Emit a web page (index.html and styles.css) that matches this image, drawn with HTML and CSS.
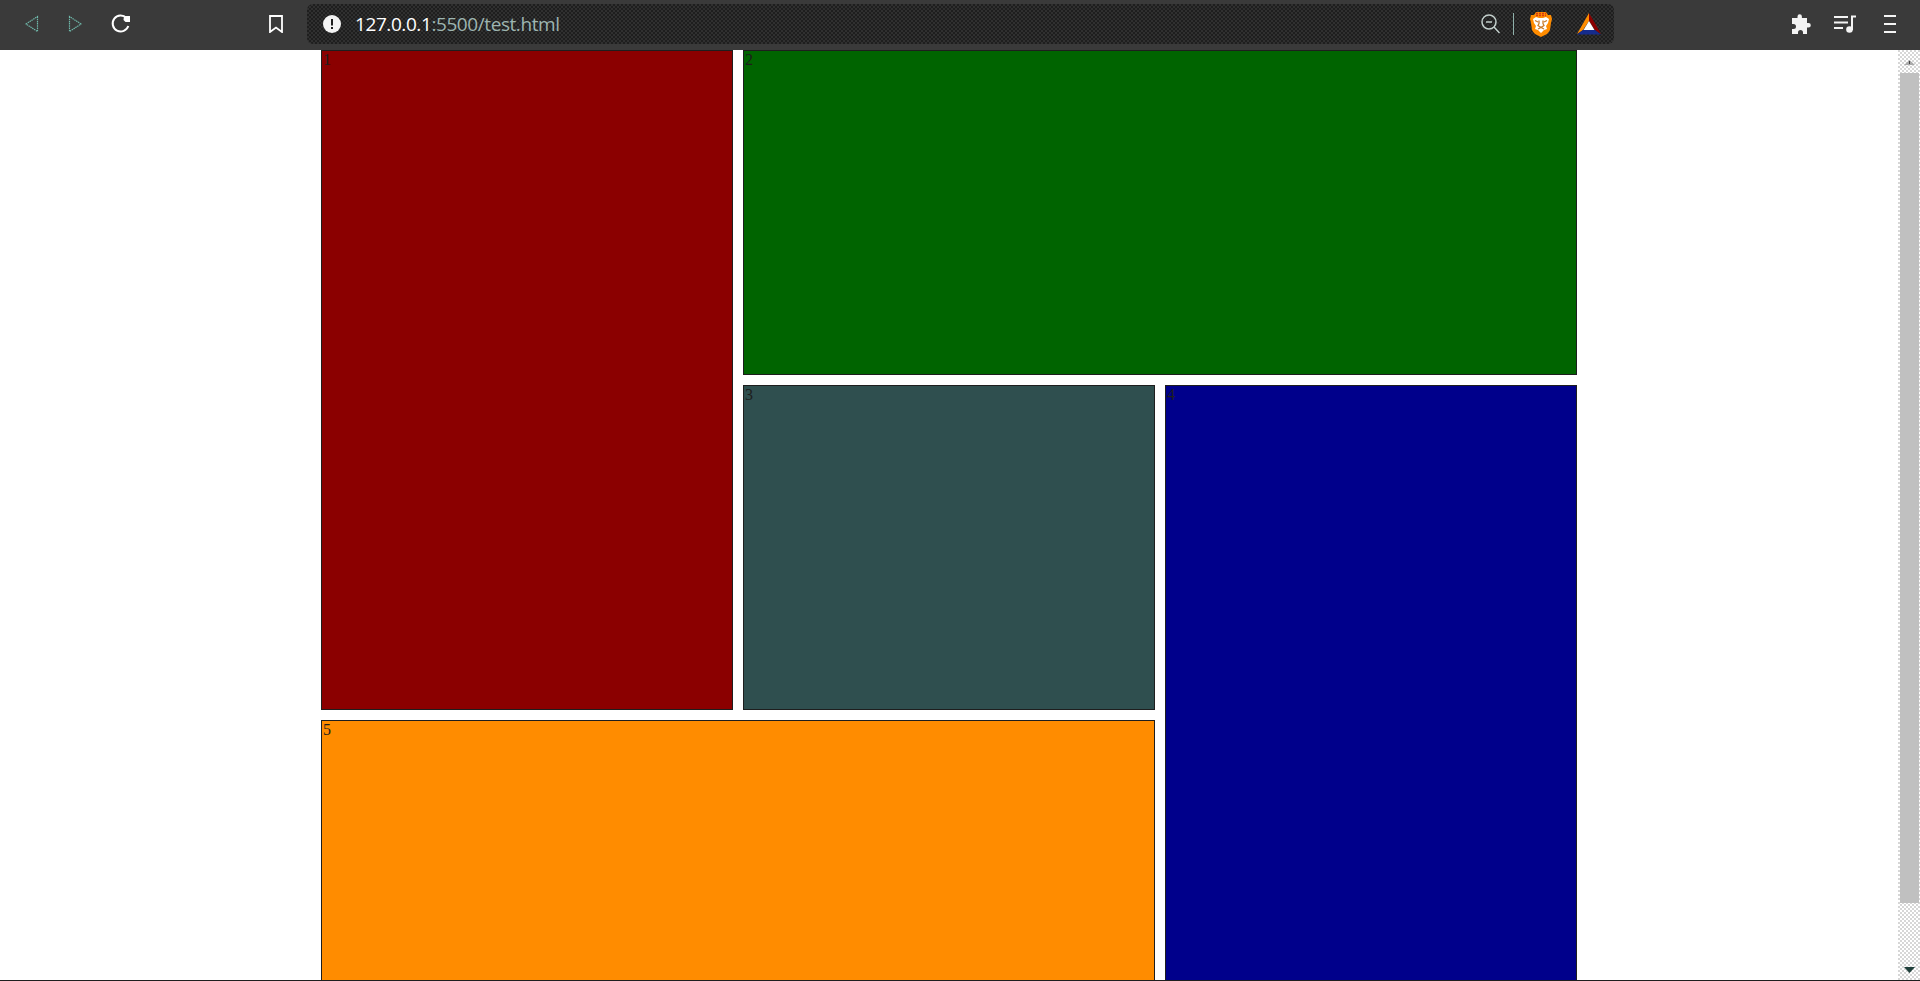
FILE: index.html
```html
<!DOCTYPE html>
<html lang="en">
<head>
    <meta charset="UTF-8">
    <meta name="viewport" content="width=device-width, initial-scale=1.0">
    <title>test.html</title>
    <link rel="stylesheet" href="styles.css">
</head>
<body>
    <!-- browser bar -->
    <header class="toolbar">
        <nav class="nav-buttons">
            <svg class="arrow" width="14" height="18" viewBox="0 0 14 18"><path d="M12.5 1.5v15L1 9z"/></svg>
            <svg class="arrow" width="14" height="18" viewBox="0 0 14 18"><path d="M1.5 1.5v15L13 9z"/></svg>
            <svg class="reload" width="20" height="20" viewBox="0 0 20 20">
                <path d="M15.5 4A8 8 0 1 0 17.3 12" fill="none" stroke="#fff" stroke-width="2"/>
                <path d="M13 2h6v6h-4.500l-2-2z" fill="#fff"/>
            </svg>
        </nav>
        <svg class="bookmark" width="14" height="18" viewBox="0 0 14 18"><path d="M1 1h12v16l-6-4.500L1 17z" fill="none" stroke="#fff" stroke-width="1.800"/></svg>

        <div class="address">
            <svg width="18" height="18" viewBox="0 0 18 18">
                <circle cx="9" cy="9" r="9" fill="#f4f4f4"/>
                <path d="M8 4h2v6.500H8zM8 12h2v2H8z" fill="#1e1e1e"/>
            </svg>
            <span class="url"><b>127.0.0.1</b>:5500/test.html</span>
            <svg class="zoom" width="19" height="20" viewBox="0 0 19 20" fill="none" stroke="#c3cfcc" stroke-width="1.500">
                <circle cx="8" cy="8" r="7"/>
                <path d="M5 8h6M13 13l5.500 6"/>
            </svg>
            <span class="divider"></span>
            <svg class="lion" width="22" height="25" viewBox="0 0 22 25">
                <path d="M6 0h10l2 3 3 0 1 4-1 4-1 7q-1 2-3 4l-6 3-6-3q-2-2-3-4L1 11 0 7l1-4h3z" fill="#ff8c00"/>
                <path d="M6 1.500h10M6 3.500h10" stroke="#d93c10" stroke-width="1.500" stroke-dasharray="2 1"/>
                <path d="M3 7l3-2 3 1h4l3-1 3 2-1 4-2 3 1 3-3 1-3 3-3-3-3-1 1-3-2-3z" fill="#fff"/>
                <path d="M5 8.500l3 1.500M17 8.500l-3 1.500M9 8.500v3l-1 2 3 2 3-2-1-2v-3M8 17l3-1.500 3 1.500" fill="none" stroke="#c87a28" stroke-width="1.300"/>
            </svg>
            <svg class="bat" width="24" height="22" viewBox="0 0 24 22">
                <path d="M12 0L0 21l6-4 6-9z" fill="#ff8c00"/>
                <path d="M12 0l12 21-6-4-6-9z" fill="#8b0000"/>
                <path d="M0 21.500h24L18 17H6z" fill="#152b8c"/>
                <path d="M12 8l5.500 9h-11z" fill="#fff"/>
            </svg>
        </div>

        <div class="actions">
            <svg class="puzzle" width="20" height="20" viewBox="0 0 20 20"><path d="M1 4h5.500V2.500a2.200 2.200 0 0 1 4.400 0V4H16v5h1.500a2.300 2.300 0 0 1 0 4.600H16V20h-4v-1.500a2.500 2.500 0 0 0-5 0V20H1v-5h1.500a2.500 2.500 0 0 0 0-5H1z" fill="#f4f4f4"/></svg>
            <svg class="playlist" width="22" height="18" viewBox="0 0 22 18">
                <path d="M0 2h14M0 7.500h14M0 13h9M18 15V1.500h4" fill="none" stroke="#f4f4f4" stroke-width="2"/>
                <circle cx="15.500" cy="14.500" r="3.300" fill="#f4f4f4"/>
            </svg>
            <svg width="12" height="18" viewBox="0 0 12 18"><path d="M0 1h12M0 9h12M0 17h12" stroke="#f4f4f4" stroke-width="2"/></svg>
        </div>
    </header>

    <div class="viewport">
        <main class="container">
            <div class="item item1">1</div>
            <div class="item item2">2</div>
            <div class="item item3">3</div>
            <div class="item item4">4</div>
            <div class="item item5">5</div>
        </main>
        <div class="scrollbar">
            <svg class="up" width="11" height="6" viewBox="0 0 11 6"><path d="M5.500 0L11 5H0z" fill="#aaa"/><path d="M5 1h1v3H5z" fill="#444"/></svg>
            <div class="thumb"></div>
            <svg class="down" width="11" height="6" viewBox="0 0 11 6"><path d="M0 0h11L5.500 6z" fill="#1f3f3a"/></svg>
        </div>
    </div>
</body>
</html>
```
FILE: styles.css
```css
* {
    box-sizing: border-box;
}

body {
    display: flex;
    flex-direction: column;
    height: 100vh;
    margin: 0;
    overflow: hidden;
    background: #fff;
    color: #1e1e1e;
    font-family: "Liberation Serif", "Times New Roman", serif;
    font-size: 16px;
    border-bottom: 1px solid #1e1e1e;
}

svg {
    display: block;
    flex: none;
}

/* browser bar */
.toolbar {
    display: flex;
    flex: none;
    align-items: center;
    height: 50px;
    padding: 0 24px 2px 25px;
    background: #3a3a3a;
}

.nav-buttons {
    display: flex;
    align-items: center;
    gap: 29px;
}

.arrow path {
    fill: none;
    stroke: #6fb8aa;
    stroke-width: 1.2;
    stroke-dasharray: 1.5 0.7;
}

.bookmark {
    margin-left: 138px;
}

.address {
    display: flex;
    align-items: center;
    width: 1307px;
    height: 40px;
    margin-left: 24px;
    padding: 0 13px 0 16px;
    border-radius: 6px;
    background: radial-gradient(circle at 1px 1px, #303030 0.8px, transparent 1px) 0 0 / 4px 4px,
        radial-gradient(circle at 3px 3px, #303030 0.8px, transparent 1px) 0 0 / 4px 4px, #1e1e1e;
}

.url {
    margin-left: 14px;
    color: #9db5b1;
    font-family: "Open Sans", "Noto Sans", sans-serif;
    font-size: 19px;
    letter-spacing: -0.42px;
    line-height: 24px;
}

.url b {
    color: #fff;
    font-weight: 400;
}

.zoom {
    margin-left: auto;
}

.divider {
    width: 1px;
    height: 22px;
    margin: 0 16px 0 13px;
    background: #8fb0aa;
}

.bat {
    margin-left: 25px;
}

.actions {
    display: flex;
    align-items: center;
    gap: 28px;
    margin-left: auto;
}

.puzzle {
    margin-right: -5px;
}

/* page */
.viewport {
    display: flex;
    flex: 1;
    min-height: 0;
    overflow: hidden;
}

.container {
    display: grid;
    grid-template-columns: repeat(3, 412px);
    grid-template-rows: repeat(3, 325px);
    gap: 10px;
    height: 100%;
    margin: 0 auto;
    overflow: hidden;
}

.item {
    border: 1px solid #1e1e1e;
    padding-left: 1px;
}

.item1 {
    grid-row: 1 / 3;
    background: darkred;
}

.item2 {
    grid-column: 2 / 4;
    background: darkgreen;
}

.item3 {
    background: #2f4f4f;
}

.item4 {
    grid-row: 2 / 4;
    grid-column: 3;
    background: darkblue;
}

.item5 {
    grid-row: 3;
    grid-column: 1 / 3;
    background: darkorange;
}

.scrollbar {
    display: flex;
    flex-direction: column;
    align-items: center;
    width: 22px;
    background: radial-gradient(circle at 1px 1px, #c0c0c0 0.6px, transparent 0.9px) 0 0 / 4px 4px,
        radial-gradient(circle at 3px 3px, #c0c0c0 0.6px, transparent 0.9px) 0 0 / 4px 4px, #fff;
}

.up {
    margin-top: 10px;
}

.thumb {
    width: 19px;
    height: 830px;
    margin-top: 7px;
    background: #c0c0c0;
}

.down {
    margin-top: auto;
    margin-bottom: 7px;
}
```
